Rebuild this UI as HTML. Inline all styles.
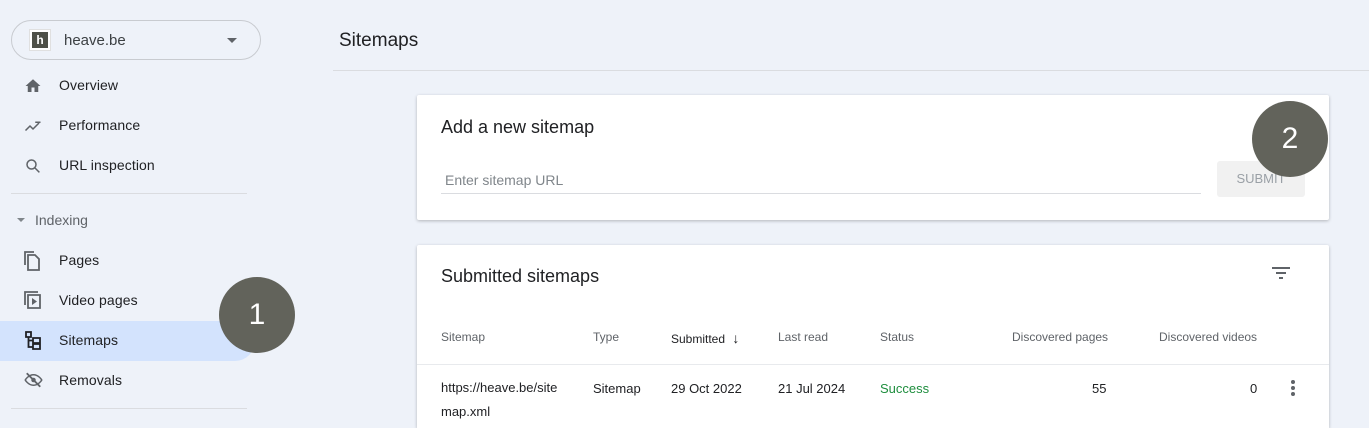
<!DOCTYPE html>
<html><head><style>
*{margin:0;padding:0;box-sizing:border-box}
html{width:1369px;height:428px;overflow:hidden}
body{width:1369px;height:428px;background:#eef2f9;font-family:"Liberation Sans",Arial,sans-serif;color:#202124;position:relative;overflow:hidden}
.a{position:absolute}
.nav{position:absolute;left:59px;font-size:14px;color:#202124;font-weight:500;letter-spacing:.1px}
.ic{position:absolute;left:24px}
.card{position:absolute;background:#fff;border-radius:2px;box-shadow:0 1px 3px rgba(0,0,0,.25)}
.th{position:absolute;top:330px;font-size:12px;color:#5f6368}
.td{position:absolute;top:381px;font-size:13px;color:#202124}
.circ{position:absolute;width:76px;height:76px;border-radius:50%;background:#62635b;color:#fff;font-size:30px;text-align:center;line-height:76px}
</style></head><body>
<div class="a" style="left:11px;top:20px;width:250px;height:40px;border:1px solid #c8cbd0;border-radius:20px"></div>
<div class="a" style="left:29px;top:29px;width:22px;height:22px;background:#fff;border:1px solid #e0e0e0"></div>
<div class="a" style="left:32px;top:32px;width:16px;height:16px;background:#4d4f47;color:#fff;font-size:12px;font-weight:bold;text-align:center;line-height:16px">h</div>
<div class="a" style="left:64px;top:32px;font-size:15px;color:#3c4043">heave.be</div>
<div class="a" style="left:227px;top:38px;border-left:5px solid transparent;border-right:5px solid transparent;border-top:5px solid #5f6368"></div>

<svg class="ic" style="top:77px" width="18" height="18" viewBox="0 0 24 24"><path fill="#5f6368" d="M10 20v-6h4v6h5v-8h3L12 3 2 12h3v8z"/></svg>
<div class="nav" style="top:77px">Overview</div>
<svg class="ic" style="top:117px" width="18" height="18" viewBox="0 0 24 24"><path fill="none" stroke="#5f6368" stroke-width="2" d="M2 18l6-6 4 4 8-8M15 7h6v1"/></svg>
<div class="nav" style="top:117px">Performance</div>
<svg class="ic" style="top:157px" width="18" height="18" viewBox="0 0 24 24"><circle cx="10" cy="10" r="6" fill="none" stroke="#5f6368" stroke-width="2"/><path d="M14.5 14.5l6 6" stroke="#5f6368" stroke-width="2"/></svg>
<div class="nav" style="top:157px">URL inspection</div>
<div class="a" style="left:11px;top:193px;width:236px;height:1px;background:#dadce0"></div>
<div class="a" style="left:17px;top:218px;border-left:4px solid transparent;border-right:4px solid transparent;border-top:4px solid #80868b"></div>
<div class="a" style="left:35px;top:212px;font-size:14px;color:#5f6368">Indexing</div>
<svg class="ic" style="top:251px" width="18" height="20" viewBox="0 0 18 20"><path fill="none" stroke="#5f6368" stroke-width="1.8" d="M1 14V1h9M4 4h7l4 4v11H4z"/></svg>
<div class="nav" style="top:252px">Pages</div>
<svg class="ic" style="top:291px" width="18" height="20" viewBox="0 0 18 20"><path fill="none" stroke="#5f6368" stroke-width="1.8" d="M1 14V1h13M4 4h12v13H4z"/><path fill="#5f6368" d="M8 7l5 3.5-5 3.5z"/></svg>
<div class="nav" style="top:292px">Video pages</div>
<div class="a" style="left:0;top:321px;width:255px;height:40px;background:#d3e3fd;border-radius:0 20px 20px 0"></div>
<svg class="ic" style="top:331px" width="18" height="20" viewBox="0 0 18 20"><path fill="none" stroke="#202124" stroke-width="1.8" d="M2 1h5v5H2zM9 7h7v5H9zM9 13h7v5H9zM4.5 6v10h4.5M4.5 9.5h4.5"/></svg>
<div class="nav" style="top:332px">Sitemaps</div>
<svg class="ic" style="top:371px" width="19" height="18" viewBox="0 0 24 24"><path fill="none" stroke="#5f6368" stroke-width="2" d="M1 12s4-7 11-7 11 7 11 7-4 7-11 7S1 12 1 12z"/><circle cx="12" cy="12" r="3" fill="#5f6368"/><path d="M3 3l18 18" stroke="#5f6368" stroke-width="2.5"/></svg>
<div class="nav" style="top:372px">Removals</div>
<div class="a" style="left:11px;top:408px;width:236px;height:1px;background:#dadce0"></div>

<div class="a" style="left:339px;top:30px;font-size:19px;color:#202124">Sitemaps</div>
<div class="a" style="left:333px;top:70px;width:1036px;height:1px;background:#dadce0"></div>

<div class="card" style="left:417px;top:95px;width:912px;height:125px"></div>
<div class="a" style="left:441px;top:117px;font-size:18px">Add a new sitemap</div>
<div class="a" style="left:445px;top:172px;font-size:14px;color:#80868b">Enter sitemap URL</div>
<div class="a" style="left:441px;top:193px;width:760px;height:1px;background:#dadce0"></div>
<div class="a" style="left:1217px;top:161px;width:88px;height:36px;background:#f1f1f1;border-radius:3px;color:#9aa0a6;font-size:13px;text-align:center;line-height:36px">SUBMIT</div>

<div class="card" style="left:417px;top:245px;width:912px;height:183px;border-radius:2px 2px 0 0"></div>
<div class="a" style="left:441px;top:266px;font-size:18px">Submitted sitemaps</div>
<svg class="a" style="left:1271px;top:265px" width="20" height="16" viewBox="0 0 20 16"><path stroke="#5f6368" stroke-width="2" d="M1 3h18M5 8h10M8 13h4"/></svg>
<div class="th" style="left:441px">Sitemap</div>
<div class="th" style="left:593px">Type</div>
<div class="th" style="left:671px;color:#202124">Submitted <span style="font-size:14px;margin-left:4px">↓</span></div>
<div class="th" style="left:778px">Last read</div>
<div class="th" style="left:880px">Status</div>
<div class="th" style="left:1012px">Discovered pages</div>
<div class="th" style="left:1159px">Discovered videos</div>
<div class="a" style="left:417px;top:364px;width:912px;height:1px;background:#e8eaed"></div>
<div class="td" style="left:441px;line-height:24px;top:376px">https://heave.be/site<br>map.xml</div>
<div class="td" style="left:593px">Sitemap</div>
<div class="td" style="left:671px">29 Oct 2022</div>
<div class="td" style="left:778px">21 Jul 2024</div>
<div class="td" style="left:880px;color:#1e8e3e">Success</div>
<div class="td" style="left:1092px">55</div>
<div class="td" style="left:1250px">0</div>
<svg class="a" style="left:1289px;top:379px" width="8" height="18"><circle cx="4" cy="3" r="2" fill="#5f6368"/><circle cx="4" cy="9" r="2" fill="#5f6368"/><circle cx="4" cy="15" r="2" fill="#5f6368"/></svg>

<div class="circ" style="left:219px;top:277px">1</div>
<div class="circ" style="left:1252px;top:101px">2</div>
</body></html>
